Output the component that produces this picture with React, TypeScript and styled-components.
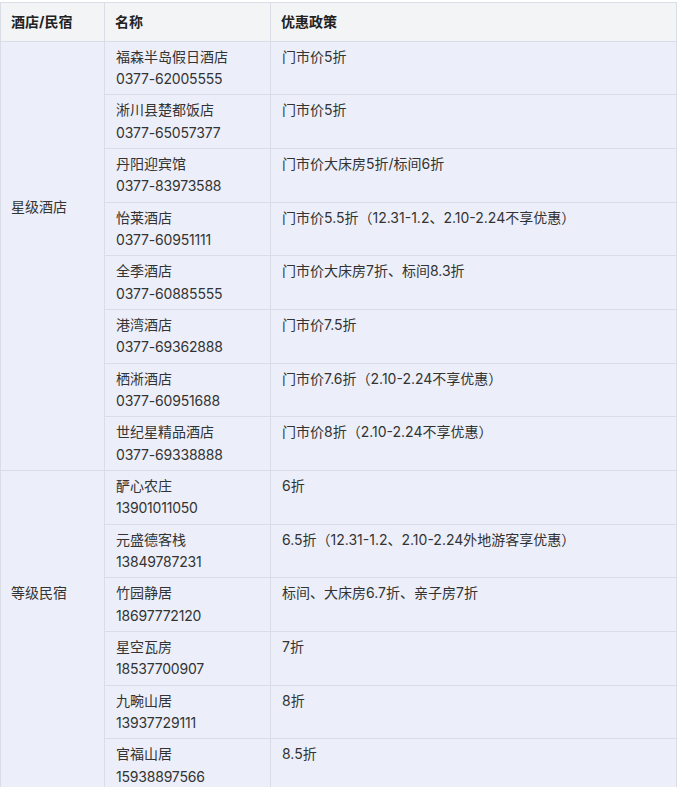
import React from 'react';
import styled, { createGlobalStyle } from 'styled-components';

const GlobalStyle = createGlobalStyle`
    body {
        margin: 0;
        background: #ffffff;
        font-family: Inter, 'Noto Sans CJK SC', sans-serif;
    }
`;

const Page = styled.div`
    padding-top: 2px;
`;

const Table = styled.table`
    width: 677px;
    border-collapse: collapse;
    table-layout: fixed;
    font-size: 14px;
    line-height: 22.35px;
    color: #333333;
`;

const HeadCell = styled.th`
    background: #f3f4f6;
    border: 1px solid #d9dde6;
    padding: 7.6px 10px;
    text-align: left;
    font-weight: 700;
    color: #222222;
`;

const Cell = styled.td`
    background: #eceff9;
    border: 1px solid #d9dde6;
    padding: 4px 10px 4px 11px;
    vertical-align: top;
`;

const GroupCell = styled(Cell)<{ $lift: number }>`
    vertical-align: middle;
    padding: 4px 10px ${(p) => 4 + p.$lift}px 10px;
`;

const Line = styled.div`
    white-space: nowrap;
`;

const Phone = styled(Line)`
    letter-spacing: -0.2px;
`;

interface Entry {
    name: string;
    phone: string;
    policy: string;
}

interface Group {
    label: string;
    lift: number;
    entries: Entry[];
}

const groups: Group[] = [
    {
        label: '星级酒店',
        lift: 98,
        entries: [
            { name: '福森半岛假日酒店', phone: '0377-62005555', policy: '门市价5折' },
            { name: '淅川县楚都饭店', phone: '0377-65057377', policy: '门市价5折' },
            { name: '丹阳迎宾馆', phone: '0377-83973588', policy: '门市价大床房5折/标间6折' },
            { name: '怡莱酒店', phone: '0377-60951111', policy: '门市价5.5折（12.31-1.2、2.10-2.24不享优惠）' },
            { name: '全季酒店', phone: '0377-60885555', policy: '门市价大床房7折、标间8.3折' },
            { name: '港湾酒店', phone: '0377-69362888', policy: '门市价7.5折' },
            { name: '栖淅酒店', phone: '0377-60951688', policy: '门市价7.6折（2.10-2.24不享优惠）' },
            { name: '世纪星精品酒店', phone: '0377-69338888', policy: '门市价8折（2.10-2.24不享优惠）' },
        ],
    },
    {
        label: '等级民宿',
        lift: 76,
        entries: [
            { name: '酽心农庄', phone: '13901011050', policy: '6折' },
            { name: '元盛德客栈', phone: '13849787231', policy: '6.5折（12.31-1.2、2.10-2.24外地游客享优惠）' },
            { name: '竹园静居', phone: '18697772120', policy: '标间、大床房6.7折、亲子房7折' },
            { name: '星空瓦房', phone: '18537700907', policy: '7折' },
            { name: '九畹山居', phone: '13937729111', policy: '8折' },
            { name: '官福山居', phone: '15938897566', policy: '8.5折' },
        ],
    },
];

export default function App() {
    return (
        <Page>
            <GlobalStyle />
            <Table>
                <colgroup>
                    <col style={{ width: 104 }} />
                    <col style={{ width: 166 }} />
                    <col />
                </colgroup>
                <thead>
                    <tr>
                        <HeadCell>酒店/民宿</HeadCell>
                        <HeadCell>名称</HeadCell>
                        <HeadCell>优惠政策</HeadCell>
                    </tr>
                </thead>
                <tbody>
                    {groups.map((group) =>
                        group.entries.map((entry, i) => (
                            <tr key={entry.name}>
                                {i === 0 && (
                                    <GroupCell rowSpan={group.entries.length} $lift={group.lift}>
                                        {group.label}
                                    </GroupCell>
                                )}
                                <Cell>
                                    <Line>{entry.name}</Line>
                                    <Phone>{entry.phone}</Phone>
                                </Cell>
                                <Cell>{entry.policy}</Cell>
                            </tr>
                        ))
                    )}
                </tbody>
            </Table>
        </Page>
    );
}
